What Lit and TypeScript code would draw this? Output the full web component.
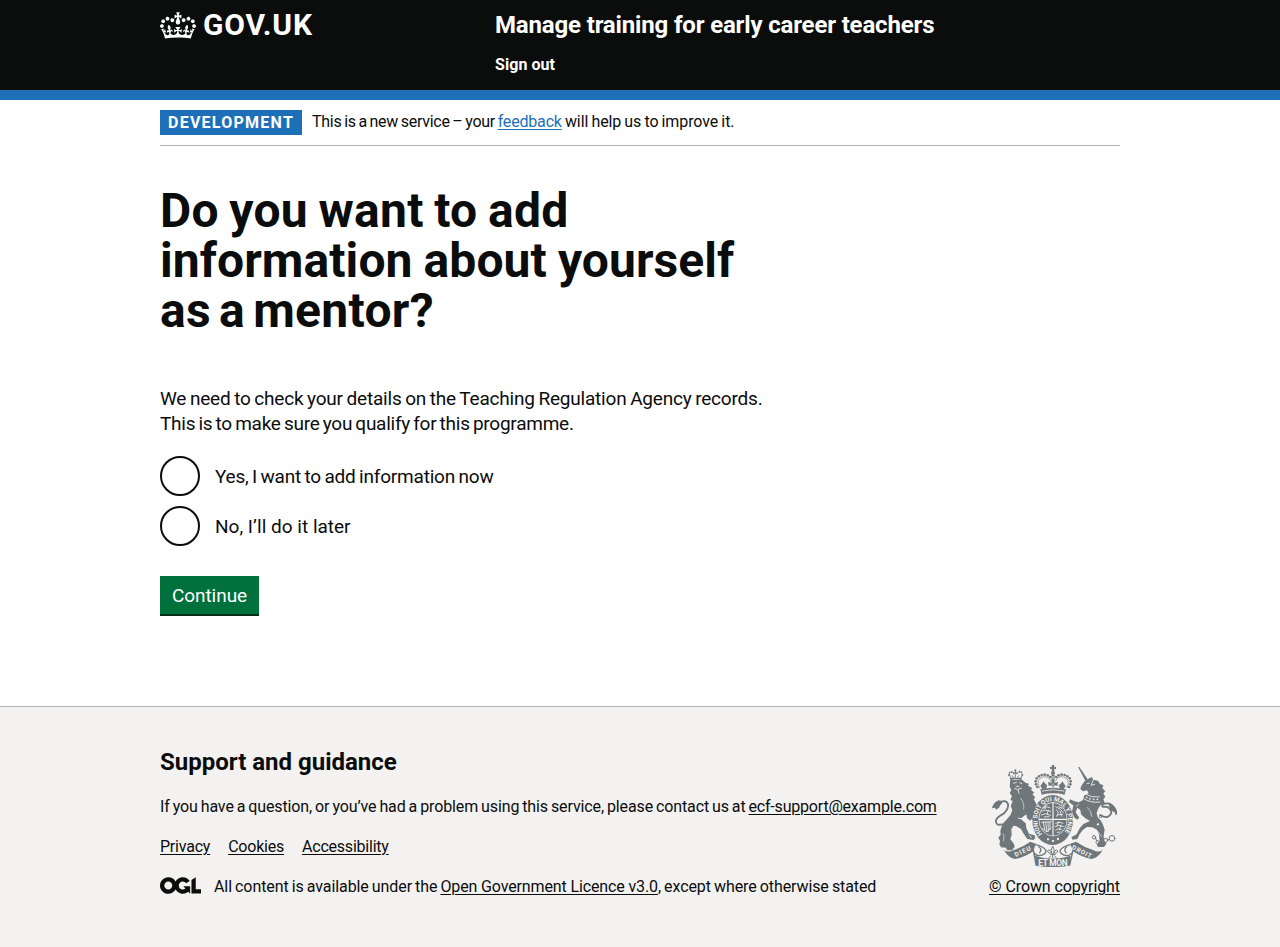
import { LitElement, html, svg, css } from "lit";
import { customElement } from "lit/decorators.js";

const dots = (pts: number[][], r: number) =>
  pts.map(([x, y]) => svg`<circle cx=${x} cy=${y} r=${r} />`);

@customElement("royal-crest")
export class RoyalCrest extends LitElement {
  static styles = css`
    :host { display: block; width: 125px; height: 102px; }
    svg { display: block; width: 100%; height: 100%; }
    .ink { fill: #6f777b; }
    .pale { fill: #f3f2f1; }
    .line { fill: none; stroke: #6f777b; stroke-linecap: round; stroke-linejoin: round; }
    .cut { fill: none; stroke: #f3f2f1; stroke-linecap: round; stroke-linejoin: round; }
    text { font-family: Roboto, "Liberation Sans", sans-serif; font-weight: 700; fill: #f3f2f1; }
    .motto { font-size: 19px; }
    .motto-mid { font-size: 25px; }
    .garter { font-size: 19px; }
  `;

  private lion() {
    return svg`
      <g class="ink">
        <path d="M91 75 L127 75 L136 83 L147 86 L144 92 L157 99 L153 104 L163 113 L157 117 L166 128 L161 132 L167 143
                 L170 150 L158 166 L158 190 L150 197 L141 189 L139 178 L128 186 L122 192 L137 205 L139 220 L147 236 L164 241 L166 249 L160 255
                 L142 252 L130 235 L123 222 L108 213 L101 212 L94 222 L95 240 L91 252 L102 267 L104 276 L96 286 L81 286 L78 278 L63 277 L58 268
                 L60 257 L55 248 L62 239 L61 228 L67 207 L78 196 L91 181 L97 166 L92 153 L98 139 L91 134 L96 123 L89 115 L94 105 L89 95 Z" />
        <path d="M150 160 L158 150 L166 158 L164 176 L176 188 L169 198 L159 196 Z" />
        <path d="M36 160 Q39 144 55 136 L66 138 Q70 143 62 149 L57 158 L48 164 L45 158 Z" />
        <path d="M90 68 L125 68 L124 76 Q106 70 91 76 Z" />
        <circle cx="106" cy="46" r="3.4" />
        ${dots([[87, 60], [89, 53], [95, 51], [101, 55], [111, 55], [118, 50], [124, 52], [127, 59], [106, 52]], 3)}
      </g>
      <path class="line" stroke-width="2.6" d="M89 60 L92 70 M127 60 L123 70 M106 52 L106 70 M97 62 L100 68 M116 62 L113 68" />
      <path class="line" stroke-width="5.5" d="M55 145 Q77 131 84 147 Q87 160 72 175 Q51 186 48 196 Q46 213 66 208" />
      <g class="cut" stroke-width="2.6">
        <path d="M100 85 L109 82 M119 83 L126 86 M108 94 L117 94 M104 101 Q113 107 124 100 M114 105 L117 115" />
        <path d="M133 188 Q123 193 115 190 M148 240 L154 248" />
      </g>
      <path class="cut" stroke-width="1.8" d="M122 130 Q134 143 131 162 M71 237 Q74 250 70 258" />`;
  }

  private unicorn() {
    return svg`
      <path class="ink" d="M294 36 L298 36 L323 73 L316 77 Z" />
      <g class="ink">
        <path d="M315 77 L328 70 L336 66 L339 74 L354 77 L360 87 L370 91 L367 100 L376 109 L370 115 L376 126 L370 132 L374 143
                 L360 152 L354 163 L350 174 L353 187 L363 197 L369 209 L374 224 L371 242 L372 256 L379 267 L372 276 L355 276 L350 270 L359 258 L357 239
                 L351 224 L337 217 L321 216 L309 224 L299 237 L292 252 L278 254 L274 247 L290 238 L298 221 L310 207 L330 198 L316 190 L303 178
                 L301 165 L292 158 L287 171 L294 183 L298 187 L292 194 L283 188 L276 170 L280 151 L267 142 L270 133 L284 139 L297 142 L308 136 L313 121
                 L326 115 L321 106 L309 109 L301 102 L304 92 Z" />
      </g>
      <path class="line" stroke-width="5.5" d="M361 180 Q385 195 394 174 Q393 158 377 155 Q362 158 369 148 Q389 139 402 157 Q410 166 408 177" />
      <path class="ink" d="M385 146 L401 153 L411 176 L403 172 L392 166 Z" />
      <g class="cut" stroke-width="2.6">
        <path d="M321 86 L329 84 M339 76 L334 91 L344 88 M315 117 Q335 129 358 126 M311 131 Q332 145 360 141" />
      </g>
      <g class="pale">${dots([[320, 127], [330, 131], [341, 133], [352, 133]], 2.6)}</g>
      <path class="cut" stroke-width="2" d="M323 158 Q335 169 335 184 M296 148 L289 154 M353 229 L364 244" />
      <g class="line" stroke-width="3">
        <circle cx="342" cy="247" r="5" /><circle cx="353" cy="262" r="5" />
        <circle cx="377" cy="256" r="6" /><circle cx="396" cy="250" r="8.5" />
        <circle cx="354" cy="208" r="5" class="pale" /><circle cx="362" cy="184" r="4" />
        <path d="M347 250 L350 257 M359 261 L371 258 M383 255 L388 253" />
      </g>`;
  }

  private crown() {
    return svg`
      <g class="ink">
        <path d="M215 30 L223 30 L222 37 L228 35 L228 43 L222 41 L223 49 L215 49 L216 41 L210 43 L210 35 L216 37 Z" />
        <circle cx="219" cy="54" r="6" />
        <path d="M181 103 Q219 93 258 103 L254 119 Q219 111 185 119 Z" />
        <path d="M214 60 L224 60 L223 84 L215 84 Z" />
        <path d="M219 75 L224 84 L234 80 L232 93 L224 91 L219 97 L214 91 L206 93 L204 80 L214 84 Z" />
        <path d="M191 79 L196 86 L202 91 L198 101 L187 102 L181 93 Z M247 79 L242 86 L236 91 L240 101 L251 102 L257 93 Z" />
        ${dots([[168, 88], [167, 79], [170, 70], [177, 64], [185, 60], [194, 59], [203, 61], [210, 66],
          [271, 88], [272, 79], [269, 70], [262, 64], [254, 60], [245, 59], [236, 61], [229, 66], [172, 96], [267, 96]], 4)}
      </g>
      <path class="line" stroke-width="2" d="M178 98 Q166 73 188 66 Q206 62 213 79 M261 98 Q273 73 251 66 Q233 62 226 79" />
      <path class="cut" stroke-width="2.4" d="M187 108 Q219 100 252 108 M219 64 L219 71 M219 86 L219 91" />`;
  }

  private shield() {
    return svg`
      <ellipse class="ink" cx="218" cy="195" rx="61" ry="75" />
      <ellipse class="pale" cx="219" cy="193" rx="43" ry="51" />
      <ellipse class="ink" cx="219" cy="193" rx="41" ry="49" />
      <path class="cut" stroke-width="3.5" d="M219 144 L219 242 M178 193 L260 193" />
      <g class="cut" stroke-width="2.6">
        <path d="M190 159 L199 155 L209 158 M186 169 L195 165 L212 169 M184 180 L196 176 L211 181 M193 186 L207 185 M198 153 L194 162 M205 166 L201 178" />
        <path d="M227 155 L241 163 L250 173 M229 164 L235 172 L230 184 M240 169 L246 184 M233 180 L248 178 M236 155 L246 160" />
        <path d="M190 201 L194 224 M197 201 L200 229 M204 201 L205 229 M210 201 L210 224 M185 202 L213 200 M188 221 L201 231 L213 219" />
        <path d="M227 205 L237 201 L249 205 M225 215 L236 211 L250 215 M227 225 L236 221 L245 225 M232 232 L240 231 M236 201 L231 213 M243 211 L238 224" />
      </g>
      <path class="ink" d="M196 247 Q218 256 242 247 L235 265 Q218 273 203 265 Z" />
      <g class="pale">${dots([[204, 253], [219, 258], [234, 252]], 3.4)}</g>
      <path id="garter-path" fill="none" d="M187 237 A46 57 0 1 1 249 237" />
      <text class="garter" textLength="246" lengthAdjust="spacingAndGlyphs"><textPath href="#garter-path" textLength="246" lengthAdjust="spacingAndGlyphs">HONI SOIT QUI MAL Y PENSE</textPath></text>`;
  }

  private ribbon() {
    return svg`
      <g class="ink">
        <path d="M72 285 Q84 294 99 286 Q127 277 151 260 L167 266 L160 289 Q132 308 105 312 Q83 308 72 285 Z" />
        <path d="M368 285 Q355 294 341 286 Q313 277 288 260 L271 266 L279 289 Q308 308 335 312 Q356 308 368 285 Z" />
        <path d="M165 302 Q218 320 272 302 L269 332 Q218 341 168 332 Z" />
      </g>
      <g class="line" stroke-width="4">
        <path d="M162 268 Q190 273 198 286 Q198 301 176 302 Q161 299 160 286 L168 330" />
        <path d="M276 268 Q248 273 240 286 Q240 301 262 302 Q277 299 279 286 L269 330" />
        <path d="M177 276 Q187 283 179 293 M260 276 Q250 283 258 293" />
      </g>
      <g class="line" stroke-width="3">
        <path d="M218 274 Q209 285 218 299 Q227 285 218 274 M214 293 Q203 297 203 287 Q207 281 212 288 M222 293 Q233 297 233 287 Q229 281 224 288 M211 298 L226 298 M218 298 L218 309 M212 303 L207 308 M224 303 L229 308" />
      </g>
      <text class="motto" transform="translate(107 306) rotate(-25)" textLength="52">DIEU</text>
      <text class="motto motto-mid" x="175" y="332" textLength="88">ET MON</text>
      <text class="motto" transform="translate(274 281) rotate(27)" textLength="64">DROIT</text>`;
  }

  render() {
    return html`<svg viewBox="36 30 375 306" role="img" aria-label="Royal coat of arms">
      ${this.lion()} ${this.unicorn()} ${this.shield()} ${this.crown()} ${this.ribbon()}
    </svg>`;
  }
}

@customElement("app-root")
export class AppRoot extends LitElement {
  static styles = css`
    :host {
      display: flex; flex-direction: column; min-height: 947px; box-sizing: border-box;
      font-family: Roboto, "Liberation Sans", sans-serif; font-size: 16px; line-height: 20px;
      color: #0b0c0c; background: #fff;
    }
    * { box-sizing: border-box; }
    h1, h2, p { margin: 0; }
    a { color: inherit; text-decoration: underline; text-decoration-thickness: 1px; text-underline-offset: 2px; }
    .container { width: 960px; margin: 0 auto; }

    header { background: #0b0c0c; color: #fff; height: 100px; border-bottom: 10px solid #1d70b8; }
    .bar { display: grid; grid-template-columns: 335px 1fr; padding-top: 10px; }
    .logo { display: flex; gap: 7px; height: 30px; }
    .crown { width: 36px; height: 27px; margin-top: 1.5px; fill: #fff; }
    .wordmark { font-size: 30px; line-height: 30px; font-weight: 700; letter-spacing: 0.85px; }
    .service { font-size: 24px; line-height: 30px; font-weight: 700; letter-spacing: -0.16px; }
    .signout { margin-top: 15px; font-weight: 700; letter-spacing: 0.05px; }

    .phase { display: flex; align-items: center; gap: 10px; padding: 10px 0; border-bottom: 1px solid #b1b4b6; }
    .tag { width: 142px; height: 25px; padding: 3px 0 2px 8px; background: #1d70b8; color: #fff; font-weight: 700; letter-spacing: 1.25px; }
    .phase p { white-space: pre; margin-top: -1px; }
    .phase a { color: #1d70b8; letter-spacing: -0.18px; }
    .ph1 { letter-spacing: -0.25px; word-spacing: -1.1px; }
    .ph2 { letter-spacing: -0.1px; word-spacing: -0.7px; }

    main { flex: 1; padding-top: 40px; }
    h1 { font-size: 48px; line-height: 50px; margin-bottom: 50px; }
    h1 span, .lead span { display: block; }
    .h-a { letter-spacing: 0.3px; word-spacing: -1.8px; }
    .h-b { letter-spacing: 0.08px; word-spacing: -1px; }
    .h-c { letter-spacing: 0.3px; word-spacing: -4.1px; }
    .lead { font-size: 19px; line-height: 25px; margin-bottom: 20px; white-space: nowrap; }
    .l1 { letter-spacing: -0.2px; word-spacing: -0.83px; }
    .l2 { letter-spacing: -0.25px; word-spacing: -1.25px; }
    .radios { display: flex; flex-direction: column; gap: 10px; margin-bottom: 30px; }
    .radio { display: flex; align-items: center; gap: 15px; height: 40px; font-size: 19px; line-height: 25px; }
    .radio input { appearance: none; width: 40px; height: 40px; margin: 0; border: 2px solid #0b0c0c; border-radius: 50%; }
    .r1 { letter-spacing: -0.2px; word-spacing: -1.05px; }
    .continue {
      display: block; width: 99px; height: 38px; padding: 1px 0 0; border: 0; background: #00703c; color: #fff;
      box-shadow: 0 2px 0 #002d18; font: 400 19px/37px Roboto, "Liberation Sans", sans-serif; letter-spacing: -0.05px;
    }

    footer { height: 241px; background: #f3f2f1; border-top: 1px solid #b1b4b6; }
    .foot { display: flex; justify-content: space-between; align-items: flex-end; padding-top: 40px; }
    h2 { font-size: 24px; line-height: 30px; margin-bottom: 20px; }
    .support { white-space: pre; margin-bottom: 20px; }
    .s1 { letter-spacing: -0.12px; word-spacing: -0.86px; }
    .s2 { letter-spacing: -0.2px; }
    .links { display: flex; gap: 18px; margin-bottom: 20px; letter-spacing: -0.22px; }
    .licence { display: flex; gap: 13px; }
    .ogl { width: 41px; height: 17px; }
    .licence p { white-space: pre; }
    .o1 { letter-spacing: -0.08px; word-spacing: -0.83px; }
    .o2 { letter-spacing: -0.13px; }
    .o3 { letter-spacing: -0.1px; word-spacing: -0.7px; }
    .copyright { display: flex; flex-direction: column; align-items: center; gap: 10px; }
    .copyright a { letter-spacing: -0.09px; }
  `;

  render() {
    return html`
      <header>
        <div class="container bar">
          <div class="logo">
            <svg class="crown" viewBox="0 0 132 97" aria-hidden="true"><path fill-rule="evenodd" d="M25 30.2c3.5 1.5 7.7-.2 9.1-3.7 1.5-3.6-.2-7.8-3.9-9.2-3.6-1.4-7.6.3-9.1 3.9-1.4 3.5.3 7.5 3.9 9zM9 39.5c3.6 1.5 7.8-.2 9.2-3.7 1.5-3.6-.2-7.8-3.9-9.1-3.6-1.5-7.6.2-9.1 3.8-1.4 3.5.3 7.5 3.8 9zM4.4 57.2c3.5 1.5 7.7-.2 9.1-3.8 1.5-3.6-.2-7.7-3.9-9.1-3.5-1.5-7.6.3-9.1 3.8-1.4 3.5.3 7.6 3.9 9.1zm38.3-21.4c3.5 1.5 7.7-.2 9.1-3.8 1.5-3.6-.2-7.7-3.9-9.1-3.6-1.5-7.6.3-9.1 3.8-1.3 3.6.4 7.7 3.9 9.1zm64.4-5.6c-3.6 1.5-7.8-.2-9.1-3.7-1.5-3.6.2-7.8 3.8-9.2 3.6-1.4 7.7.3 9.2 3.9 1.3 3.5-.4 7.5-3.9 9zm15.9 9.3c-3.6 1.5-7.7-.2-9.1-3.7-1.5-3.6.2-7.8 3.7-9.1 3.6-1.5 7.7.2 9.2 3.8 1.5 3.5-.3 7.5-3.8 9zm4.7 17.7c-3.6 1.5-7.8-.2-9.2-3.8-1.5-3.6.2-7.7 3.9-9.1 3.6-1.5 7.7.3 9.2 3.8 1.3 3.5-.4 7.6-3.9 9.1zM89.3 35.8c-3.6 1.5-7.8-.2-9.2-3.8-1.4-3.6.2-7.7 3.9-9.1 3.6-1.5 7.7.3 9.2 3.8 1.4 3.6-.3 7.7-3.9 9.1zM69.7 17.7l8.9 4.7V9.3l-8.9 2.8c-.2-.3-.5-.6-.9-.9L72.4 0H59.6l3.5 11.2c-.3.3-.6.5-.9.9l-8.8-2.8v13.1l8.8-4.7c.3.3.6.7.9.9l-5 15.4v.1c-.2.8-.4 1.6-.4 2.4 0 4.1 3.1 7.5 7 8.1h.2c.3 0 .7.1 1 .1.4 0 .7 0 1-.1h.2c4-.6 7.1-4.1 7.1-8.1 0-.8-.1-1.7-.4-2.4V34l-5.1-15.4c.4-.2.7-.6 1-.9zM66 92.8c16.9 0 32.8 1.1 47.1 3.2 4-16.9 8.9-26.7 14-33.5l-9.6-3.4c1 4.9 1.1 7.2 0 10.2-1.5-1.4-3-4.3-4.2-8.7L108.6 76c2.8-2 5-3.2 7.5-3.3-4.4 9.4-10 11.9-13.6 11.2-4.3-.8-6.3-4.6-5.6-7.9 1-4.7 5.7-5.9 8-.5 4.3-8.7-3-11.4-7.6-8.8 7.1-7.2 7.9-13.5 2.1-21.1-8 6.1-8.1 12.3-4.5 20.8-4.7-5.4-12.1-2.5-9.5 6.2 3.4-5.2 7.9-2 7.2 3.1-.6 4.3-6.4 7.8-13.5 7.2-10.3-.9-10.9-8-11.2-13.8 2.5-.5 7.1 1.8 11 7.3L80.2 60c-4.1 4.4-8 5.3-12.3 5.4 1.4-4.4 8-11.6 8-11.6H55.5s6.4 7.2 7.9 11.6c-4.2-.1-8-1-12.3-5.4l1.4 16.4c3.9-5.5 8.5-7.7 10.9-7.3-.3 5.8-.9 12.8-11.1 13.8-7.2.6-12.9-2.9-13.5-7.2-.7-5 3.8-8.3 7.1-3.1 2.7-8.7-4.6-11.6-9.4-6.2 3.7-8.5 3.6-14.7-4.6-20.8-5.8 7.6-5 13.9 2.2 21.1-4.7-2.6-11.9.1-7.7 8.8 2.3-5.5 7.1-4.2 8.1.5.7 3.3-1.3 7.1-5.7 7.9-3.5.7-9-1.8-13.5-11.2 2.5.1 4.7 1.3 7.5 3.3l-4.7-15.4c-1.2 4.4-2.7 7.2-4.3 8.7-1.1-3-.9-5.3 0-10.2l-9.5 3.4c5 6.9 9.9 16.7 14 33.5 14.8-2.1 30.8-3.2 47.7-3.2z" /></svg>
            <span class="wordmark">GOV.UK</span>
          </div>
          <div>
            <div class="service">Manage training for early career teachers</div>
            <div class="signout">Sign out</div>
          </div>
        </div>
      </header>
      <div class="container phase">
        <strong class="tag">DEVELOPMENT</strong>
        <p><span class="ph1">This is a new service – your </span><a>feedback</a><span class="ph2"> will help us to improve it.</span></p>
      </div>
      <main class="container">
        <h1><span class="h-a">Do you want to add</span><span class="h-b">information about yourself</span><span class="h-c">as a mentor?</span></h1>
        <p class="lead"><span class="l1">We need to check your details on the Teaching Regulation Agency records.</span><span class="l2">This is to make sure you qualify for this programme.</span></p>
        <div class="radios">
          <label class="radio"><input type="radio" name="choice" /><span class="r1">Yes, I want to add information now</span></label>
          <label class="radio"><input type="radio" name="choice" /><span>No, I’ll do it later</span></label>
        </div>
        <button class="continue">Continue</button>
      </main>
      <footer>
        <div class="container foot">
          <div>
            <h2>Support and guidance</h2>
            <p class="support"><span class="s1">If you have a question, or you’ve had a problem using this service, please contact us at </span><a class="s2">ecf-support@example.com</a></p>
            <div class="links"><a>Privacy</a><a>Cookies</a><a>Accessibility</a></div>
            <div class="licence">
              <svg class="ogl" viewBox="0 0 483.2 195.7" aria-hidden="true"><path fill="#0b0c0c" d="M421.5 142.8V.1l-50.7 32.3v161.1h112.4v-50.7zm-122.3-9.6A47.12 47.12 0 0 1 221 97.8c0-26 21.1-47.1 47.1-47.1 16.7 0 31.4 8.7 39.7 21.8l42.7-27.2A97.63 97.63 0 0 0 268.1 0c-36.5 0-68.3 20.1-85.1 49.7A98 98 0 0 0 97.8 0C43.9 0 0 43.9 0 97.8s43.9 97.8 97.8 97.8c36.5 0 68.3-20.1 85.1-49.7a97.76 97.76 0 0 0 149.6 25.4l19.4 22.2h3v-87.8h-80l24.3 27.5zM97.8 145c-26 0-47.1-21.1-47.1-47.1s21.1-47.1 47.1-47.1 47.1 21.1 47.1 47.1S123.8 145 97.8 145" /></svg>
              <p><span class="o1">All content is available under the </span><a class="o2">Open Government Licence v3.0</a><span class="o3">, except where otherwise stated</span></p>
            </div>
          </div>
          <div class="copyright">
            <royal-crest></royal-crest>
            <a>© Crown copyright</a>
          </div>
        </div>
      </footer>
    `;
  }
}
